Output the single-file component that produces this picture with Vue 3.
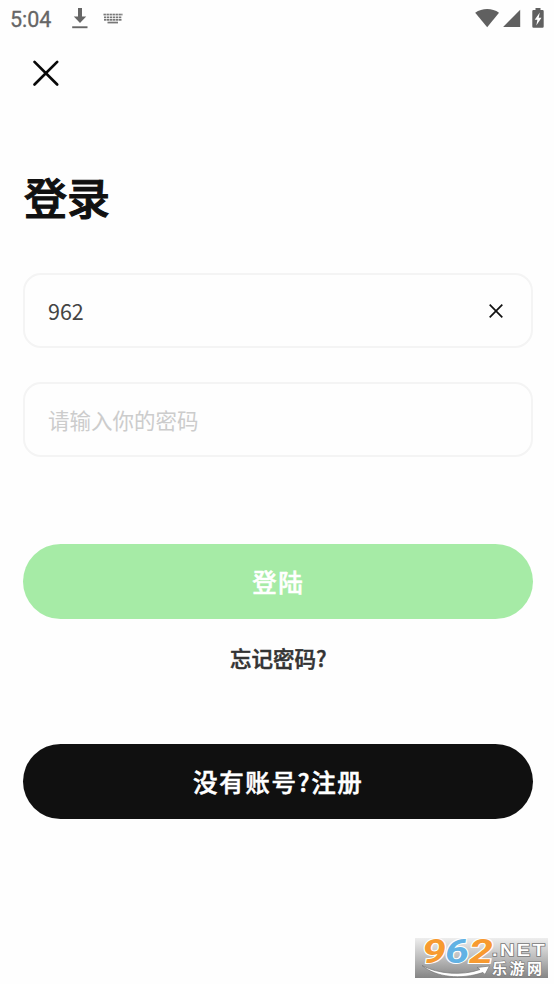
<script setup>
import { ref } from 'vue'

const account = ref('962')
const password = ref('')
const keyXs = [0, 3, 6, 9, 12, 15]
</script>

<template>
  <main class="screen">
    <header class="status">
      <span class="time">5:04</span>
      <svg class="download" width="16" height="21" viewBox="0 0 16 21">
        <path d="M6 0h4v8.500h4.200L8 15 1.800 8.500H6z" fill="#666" />
        <path d="M.2 18.300h15.300v1.900H.2z" fill="#666" />
      </svg>
      <svg class="keyboard" width="20" height="12" viewBox="0 0 20 12">
        <g fill="#777">
          <rect v-for="x in keyXs" :key="'a' + x" :x="x + 0.500" y="0.700" width="2.400" height="1.700" />
          <rect x="18.200" y="0.700" width="1.300" height="1.700" />
          <rect v-for="x in keyXs" :key="'b' + x" :x="x + 1" y="3.500" width="2.300" height="1.700" />
          <rect v-for="x in keyXs" :key="'c' + x" :x="x + 1" y="6" width="2.500" height="1.700" />
          <rect x="4.500" y="8.700" width="10.500" height="1.700" />
        </g>
      </svg>
      <span class="spacer"></span>
      <svg class="wifi" width="25" height="20" viewBox="0 0 25 20">
        <path d="M.2 4.800C7.200-.2 17.200-.2 24 4.800L12.200 19.200z" fill="#606060" />
      </svg>
      <svg class="signal" width="18" height="18" viewBox="0 0 18 18">
        <path d="M17.200.8v17.200H.1z" fill="#606060" />
      </svg>
      <svg class="battery" width="12" height="21" viewBox="0 0 12 21">
        <path d="M3.500.1h5v2h2q1.200 0 1.200 1.200v15.300q0 1.200-1.200 1.200h-9Q.3 19.800.3 18.600V3.300q0-1.200 1.200-1.200h2z" fill="#606060" />
        <path d="M7.800 4.400 2.700 11.800h2.700l-1.100 5.600L9.500 9.800H6.700z" fill="#fff" />
      </svg>
    </header>

    <button class="close" aria-label="关闭">
      <svg width="26" height="26" viewBox="0 0 26 26">
        <path d="M1.500 1.900 24.200 24.500M24.200 1.900 1.500 24.500" stroke="#080808" stroke-width="2.700" stroke-linecap="round" />
      </svg>
    </button>

    <h1 class="title">登录</h1>

    <form class="form" @submit.prevent>
      <div class="field">
        <input v-model="account" type="text" />
        <button type="button" class="clear" aria-label="清除" @click="account = ''">
          <svg width="14" height="14" viewBox="0 0 14 14">
            <path d="M.7.7l12.600 12.600M13.300.7.7 13.300" stroke="#111" stroke-width="1.700" />
          </svg>
        </button>
      </div>
      <div class="field">
        <input v-model="password" type="password" placeholder="请输入你的密码" />
      </div>
      <button class="pill login">登陆</button>
      <a class="forgot">忘记密码?</a>
      <button type="button" class="pill register">没有账号?注册</button>
    </form>

    <div class="watermark">
      <svg width="133" height="40" viewBox="0 0 133 40">
        <defs>
          <linearGradient id="shade" x1="0" y1="0" x2="0" y2="1">
            <stop offset="0" stop-color="#eeeeee" />
            <stop offset="0.500" stop-color="#bcbcbc" />
            <stop offset="1" stop-color="#858585" />
          </linearGradient>
        </defs>
        <rect width="133" height="40" fill="url(#shade)" />
        <path d="M7 27.500C23 36 47 38 65 31.500l-3-2L74.500 28 70 36.500l-2-2C46 42 21 39.500 7 27.500z" fill="#fff" stroke="#777" stroke-width=".7" />
        <g class="digits">
          <text x="7" y="24.500" textLength="24" lengthAdjust="spacingAndGlyphs" fill="#f79a30">9</text>
          <text x="30" y="24.500" textLength="24" lengthAdjust="spacingAndGlyphs" fill="#62b2e4">6</text>
          <text x="54" y="24.500" textLength="24" lengthAdjust="spacingAndGlyphs" fill="#f79a30">2</text>
        </g>
        <text class="net" x="77" y="17.500" textLength="55" lengthAdjust="spacingAndGlyphs">.NET</text>
        <text class="site" x="77" y="35.500">乐游网</text>
      </svg>
    </div>
  </main>
</template>

<style>
body {
  background: #fff;
}
</style>

<style scoped>
.screen {
  position: relative;
  box-sizing: border-box;
  width: 554px;
  height: 984px;
  overflow: hidden;
  background: #fefefe;
  font-family: "Noto Sans CJK SC", sans-serif;
  color: #111;
}

svg {
  display: block;
  flex: none;
  overflow: visible;
}

button {
  border: 0;
  padding: 0;
  background: none;
  font-family: inherit;
}

.status {
  display: flex;
  align-items: flex-start;
  box-sizing: border-box;
  height: 40px;
  padding: 8px 10px 0;
}

.time {
  width: 62px;
  font: 400 21.500px/24px Roboto, sans-serif;
  color: #666;
  -webkit-text-stroke: 0.300px #666;
}

.keyboard {
  margin: 5px 0 0 15px;
}

.spacer {
  flex: 1;
}

.wifi {
  margin-right: 3px;
}

.signal {
  margin: 1px 11px 0 0;
}

.close {
  display: block;
  margin: 20px 0 0 33px;
}

.title {
  margin: 78px 0 0 24px;
  font-size: 43px;
  font-weight: 500;
  line-height: 64px;
  -webkit-text-stroke: 1.100px #111;
}

.form {
  display: flex;
  flex-direction: column;
  margin: 45px 21.500px 0 23px;
}

.field {
  display: flex;
  align-items: center;
  box-sizing: border-box;
  height: 75px;
  margin-bottom: 34px;
  padding: 0 28px 0 23px;
  border: 2px solid #f4f4f4;
  border-radius: 18px;
}

input {
  flex: 1;
  min-width: 0;
  height: 40px;
  padding: 0;
  border: 0;
  outline: 0;
  background: transparent;
  font-family: inherit;
  font-size: 21.500px;
  color: #444;
}

input::placeholder {
  color: #ccc;
  opacity: 1;
}

.pill {
  height: 75px;
  border-radius: 38px;
  color: #fff;
  font-size: 24.500px;
  font-weight: 500;
  letter-spacing: 1.600px;
  text-indent: 1px;
  -webkit-text-stroke: 0.500px #fff;
}

.login {
  margin-top: 53px;
  background: #a6eba6;
}

.forgot {
  align-self: center;
  margin: 23px 0 0 1px;
  font-size: 21.500px;
  font-weight: 500;
  line-height: 32px;
  color: #333;
  -webkit-text-stroke: 0.500px #333;
}

.register {
  margin-top: 70px;
  background: #101010;
}

.watermark {
  position: absolute;
  right: 6px;
  bottom: 6px;
}

.digits text {
  font: italic 700 33px Roboto, sans-serif;
  stroke: #fff;
  stroke-width: 2px;
  paint-order: stroke;
}

.net {
  font: 700 17px "Liberation Sans", sans-serif;
  letter-spacing: 2px;
  fill: #fff;
  stroke: #777;
  stroke-width: 1.500px;
  paint-order: stroke;
}

.site {
  font: 700 15px "Noto Sans CJK SC", sans-serif;
  letter-spacing: 2.500px;
  fill: #fff;
  stroke: #777;
  stroke-width: 1.200px;
  paint-order: stroke;
}
</style>
